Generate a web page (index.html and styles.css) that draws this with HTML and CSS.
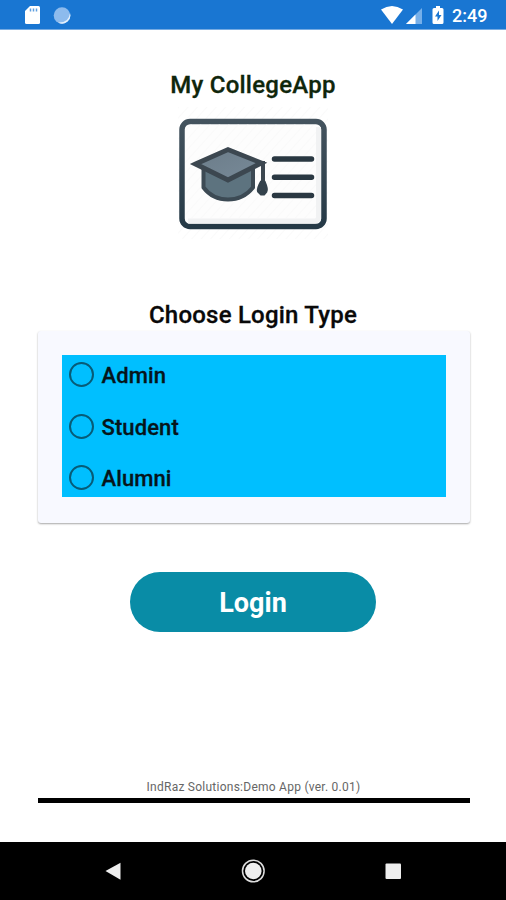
FILE: index.html
```html
<!DOCTYPE html>
<html lang="en">
<head>
<meta charset="utf-8">
<title>My CollegeApp</title>
<link rel="stylesheet" href="styles.css">
</head>
<body>
<header class="status">
  <svg class="status-left" width="60" height="20" viewBox="0 0 60 20">
    <path d="M6 1h8.500q1.500 0 1.500 1.500v15q0 1.500-1.500 1.500h-12q-1.500 0-1.500-1.500V6z" fill="#fff"/>
    <path d="M6.500 3.500v3M9.500 3.500v3M12.500 3.500v3" stroke="#5f9fe0" stroke-width="1.500"/>
    <circle cx="38" cy="10.500" r="8.300" fill="#8dbbed"/>
    <path d="M46 8a8.300 8.300 0 0 1-12 9.600Q45 18 46 8z" fill="#e4f0fc"/>
  </svg>
  <div class="status-right">
    <svg width="66" height="20" viewBox="0 0 66 20">
      <path d="M1 4.500Q12 -2.500 23 4.500L12 19z" fill="#fff"/>
      <path d="M42 3v16H26z" fill="#76afe9"/>
      <path d="M35.500 9.500V19H26z" fill="#fff"/>
      <path d="M56 1h4v2h2q1.500 0 1.500 1.500v13q0 1.500-1.500 1.500h-8q-1.500 0-1.500-1.500v-13Q52.500 3 54 3h2z" fill="#fff"/>
      <path d="M59 5.500l-4 6h2.500V16l4-6H59z" fill="#1976d2"/>
    </svg>
    <span class="clock">2:49</span>
  </div>
</header>
<main class="screen">
  <h1 class="title">My CollegeApp</h1>
  <svg class="logo" width="150" height="132" viewBox="0 0 150 132">
    <defs>
      <pattern id="hatch" width="7" height="7" patternUnits="userSpaceOnUse" patternTransform="rotate(42)"><path d="M0 0v7" stroke="#f8f8f8" stroke-width="1.500"/></pattern>
      <linearGradient id="cap" x1="0" y1="0" x2="1" y2="1"><stop offset="0" stop-color="#6b7c89"/><stop offset="1" stop-color="#788a98"/></linearGradient>
      <linearGradient id="frame" x1="0" y1="0" x2="0" y2="1"><stop offset="0" stop-color="#44535e"/><stop offset="1" stop-color="#253946"/></linearGradient>
    </defs>
    <rect width="150" height="132" fill="url(#hatch)"/>
    <rect x="4" y="14.500" width="142" height="105" rx="8" fill="#fdfdfd" stroke="url(#frame)" stroke-width="5.500"/>
    <path d="M140.500 20v90q0 4-4 4H10" fill="none" stroke="#f1f2f3" stroke-width="5"/>
    <rect x="7" y="17.500" width="131" height="94" rx="5" fill="url(#hatch)"/>
    <path d="M25.500 60v20.500q9 12 24.500 12T75 80.500V60z" fill="#5d737f" stroke="#3c4a54" stroke-width="4" stroke-linejoin="round"/>
    <path d="M17.500 57L50 42.500 83.500 56 50 73z" fill="url(#cap)" stroke="#3c4750" stroke-width="4.800" stroke-linejoin="miter"/>
    <path d="M80 56h5v20" fill="none" stroke="#3c4750" stroke-width="4"/>
    <path d="M83 74.500h3.500q3.500 8 2 10l-2.500 3h-3l-3-3q-1-3 3-10z" fill="#34424c" stroke="#34424c" stroke-width="2" stroke-linejoin="round"/>
    <path d="M96.500 52h37M96.500 70.300h37M96.500 88.500h37" fill="none" stroke="#2a3842" stroke-width="5.500" stroke-linecap="round"/>
  </svg>
  <h2 class="heading">Choose Login Type</h2>
  <section class="card">
    <div class="options">
      <label class="option"><span class="radio"></span><span class="name">Admin</span></label>
      <label class="option"><span class="radio"></span><span class="name">Student</span></label>
      <label class="option"><span class="radio"></span><span class="name">Alumni</span></label>
    </div>
  </section>
  <button class="login">Login</button>
  <footer class="footer">IndRaz Solutions:Demo App (ver. 0.01)</footer>
</main>
<nav class="navbar">
  <svg width="26" height="26" viewBox="0 0 26 26"><path d="M5.500 13L20.500 4.800v17z" fill="#eee"/></svg>
  <svg width="26" height="26" viewBox="0 0 26 26"><circle cx="13.300" cy="13" r="10.800" fill="none" stroke="#ddd" stroke-width="1.500"/><circle cx="13.300" cy="13" r="8.300" fill="#eee"/></svg>
  <svg width="26" height="26" viewBox="0 0 26 26"><rect x="5.500" y="5.500" width="15.500" height="15.500" rx="1" fill="#eee"/></svg>
</nav>
</body>
</html>
```
FILE: styles.css
```css
* { box-sizing: border-box; }
body {
  margin: 0;
  height: 900px;
  display: flex;
  flex-direction: column;
  overflow: hidden;
  background: #fff;
  font-family: Roboto, "Liberation Sans", sans-serif;
  color: #090909;
}
.status {
  flex: none;
  height: 30px;
  padding: 5px 14px 0 24px;
  display: flex;
  justify-content: space-between;
  background: #1976d2;
  border-bottom: 1px solid #76abe2;
}
.status-right { display: flex; }
.clock {
  width: 40px;
  margin-left: 6px;
  color: #fff;
  font-size: 18px;
  font-weight: 500;
  line-height: 22px;
  white-space: nowrap;
}
.screen {
  flex: 1;
  padding: 0 37px;
  display: flex;
  flex-direction: column;
  align-items: center;
}
.title, .heading { margin: 0; font-weight: 500; white-space: nowrap; -webkit-text-stroke: .3px; }
.title {
  margin-top: 40px;
  font-size: 24px;
  line-height: 30px;
  letter-spacing: .25px;
  color: #0f260b;
}
.logo { display: block; margin-top: 7px; }
.heading {
  margin-top: 61px;
  font-size: 24px;
  line-height: 30px;
  letter-spacing: .22px;
  color: #090909;
}
.card {
  width: 432px;
  height: 192px;
  margin: 1px 0 0 1px;
  padding: 24px;
  background: #f8f9ff;
  border-radius: 3px;
  box-shadow: 0 1px 2px rgba(0, 0, 0, .35);
}
.options { height: 142px; background: #00bfff; }
.option {
  height: 51.500px;
  padding-left: 7px;
  display: flex;
  align-items: flex-start;
}
.radio {
  width: 25px;
  height: 25px;
  margin: 7px 8px 0 0;
  border: 2px solid #075b77;
  border-radius: 50%;
}
.name {
  margin-top: 6px;
  font-size: 22px;
  font-weight: 500;
  line-height: 30px;
  letter-spacing: .1px;
  color: #06151b;
  -webkit-text-stroke: .3px;
}
.login {
  width: 246px;
  height: 60px;
  margin-top: 48.500px;
  padding: 2px 0 0;
  border: 0;
  border-radius: 30px;
  background: #098ca6;
  color: #fff;
  font: 700 27px/32px Roboto, sans-serif;
}
.footer {
  width: 432px;
  margin: auto 0 39px 1px;
  padding-bottom: 3px;
  border-bottom: 5px solid #000;
  color: #666;
  font-size: 12px;
  line-height: 16px;
  letter-spacing: .25px;
  text-align: center;
}
.navbar {
  flex: none;
  height: 58px;
  padding: 0 100px;
  display: flex;
  align-items: center;
  justify-content: space-between;
  background: #000;
}
```
